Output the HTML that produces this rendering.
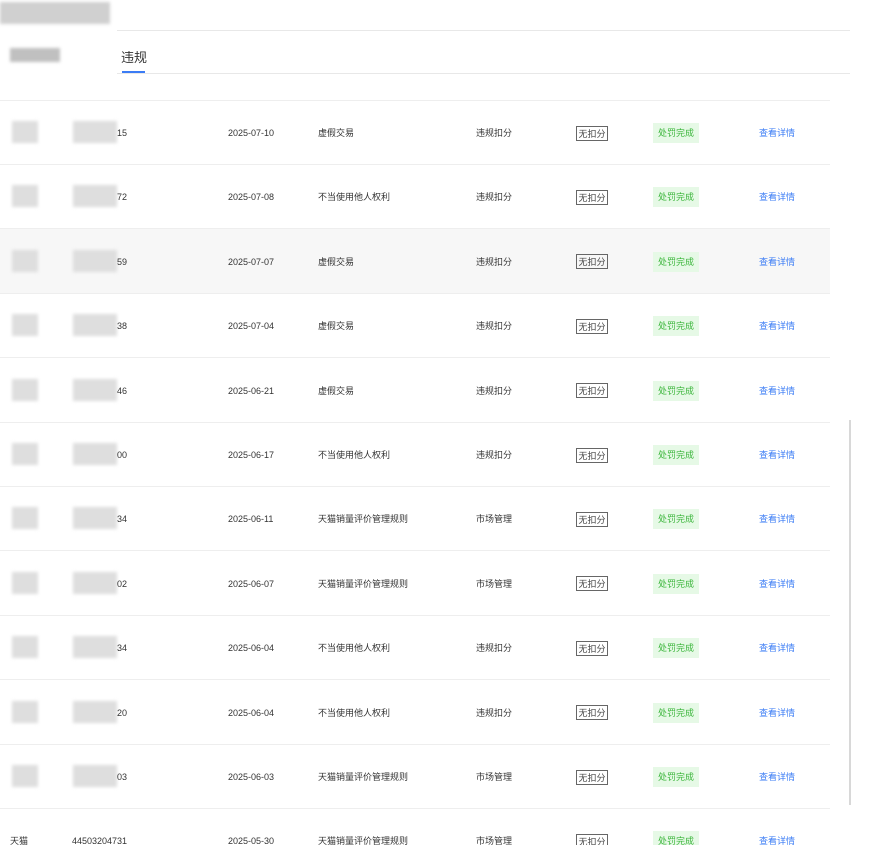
<!DOCTYPE html>
<html><head><meta charset="utf-8"><style>
*{margin:0;padding:0;box-sizing:border-box}
body{width:875px;height:854px;overflow:hidden;background:#fff;font-family:"Liberation Sans","Noto Sans CJK SC",sans-serif;font-size:9px;color:#333;position:relative}
.a{position:absolute;white-space:nowrap;line-height:12px}
.sep{position:absolute;left:0;width:830px;height:1px;background:#eee}
.blur{position:absolute;background:#dedede;filter:blur(1.5px)}
.tag{position:absolute;border:1px solid #666;height:15px;width:32px;font-size:9px;line-height:14px;text-align:center;color:#444}
.st{position:absolute;background:#e6f9e6;color:#3ab53a;height:20px;width:46px;line-height:21px;text-align:center}
.lk{position:absolute;color:#3b7cf5;line-height:12px}
</style></head><body>
<div class="blur" style="left:0;top:2px;width:110px;height:22px;background:#d0d0d0"></div>
<div class="blur" style="left:10px;top:48px;width:50px;height:14px;background:#c0c0c0"></div>
<div class="a" style="left:117px;top:30px;width:733px;height:1px;background:#e8e8e8"></div>
<div class="a" style="left:121px;top:50px;font-size:13px;line-height:16px;color:#333">违规</div>
<div class="a" style="left:122px;top:71px;width:23px;height:2px;background:#3b7cf5"></div>
<div class="a" style="left:117px;top:73px;width:733px;height:1px;background:#e8e8e8"></div>
<div class="a" style="left:0;top:229px;width:830px;height:64px;background:#f7f7f7"></div>
<div class="a" style="left:849px;top:420px;width:2px;height:385px;background:#d8d8d8"></div>
<div id="rows"></div>
<script>
var d=[["15","2025-07-10","虚假交易","违规扣分"],["72","2025-07-08","不当使用他人权利","违规扣分"],["59","2025-07-07","虚假交易","违规扣分"],["38","2025-07-04","虚假交易","违规扣分"],["46","2025-06-21","虚假交易","违规扣分"],["00","2025-06-17","不当使用他人权利","违规扣分"],["34","2025-06-11","天猫销量评价管理规则","市场管理"],["02","2025-06-07","天猫销量评价管理规则","市场管理"],["34","2025-06-04","不当使用他人权利","违规扣分"],["20","2025-06-04","不当使用他人权利","违规扣分"],["03","2025-06-03","天猫销量评价管理规则","市场管理"],["","2025-05-30","天猫销量评价管理规则","市场管理"]];
var h="";
for(var i=0;i<d.length;i++){var c=132+i*64.4;var t=c-5;
h+='<div class="sep" style="top:'+(c-32.5)+'px"></div>';
if(i<11){h+='<div class="blur" style="left:12px;top:'+(t-6)+'px;width:26px;height:22px"></div><div class="blur" style="left:73px;top:'+(t-6)+'px;width:44px;height:22px"></div><div class="a" style="left:117px;top:'+t+'px">'+d[i][0]+'</div>';}
else{h+='<div class="a" style="left:10px;top:'+t+'px">天猫</div><div class="a" style="left:72px;top:'+t+'px">44503204731</div>';}
h+='<div class="a" style="left:228px;top:'+t+'px">'+d[i][1]+'</div><div class="a" style="left:318px;top:'+t+'px">'+d[i][2]+'</div><div class="a" style="left:476px;top:'+t+'px">'+d[i][3]+'</div><div class="tag" style="left:576px;top:'+(c-6.5)+'px">无扣分</div><div class="st" style="left:653px;top:'+(c-9)+'px">处罚完成</div><div class="lk" style="left:759px;top:'+t+'px">查看详情</div>';}
h+='<div class="a" style="left:0;top:845px;width:875px;height:10px;background:#fff"></div>';
document.getElementById("rows").innerHTML=h;
</script>
</body></html>
